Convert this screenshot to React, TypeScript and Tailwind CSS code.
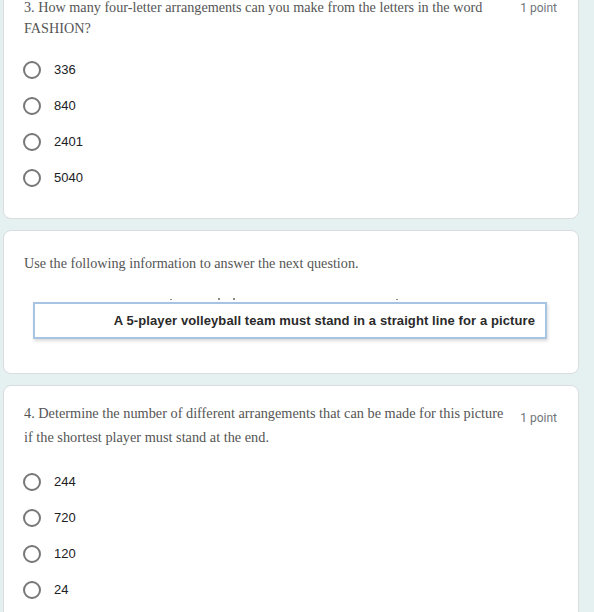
import React, { FC } from 'react';

const serif = "font-['Liberation_Serif','Times_New_Roman',serif]";

const Radio: FC<{ label: string }> = ({ label }) => (
  <div className="flex items-center h-[36px]">
    <span className="w-[18px] h-[18px] rounded-full border-2 border-[#777] -ml-[1px] shrink-0" />
    <span className="ml-[13px] text-[13px] text-[#202124] font-['Liberation_Sans','Arial',sans-serif]">{label}</span>
  </div>
);

const Points: FC = () => (
  <span className="text-[12px] text-[#70757a] font-['Roboto','Liberation_Sans',sans-serif] whitespace-nowrap">1 point</span>
);

const Card: FC<{ className?: string; children: React.ReactNode }> = ({ className = '', children }) => (
  <div className={`bg-white rounded-lg border border-[#dadce0] px-[20px] ${className}`}>{children}</div>
);

const App: FC = () => {
  return (
    <div className="min-h-screen bg-[#e5f1f1] pl-[3px] pr-[15px] overflow-hidden">
      <div className="flex flex-col gap-[11px] -mt-[28px]">
        <Card className="pt-[24px] pb-[22px]">
          <div className="flex items-start justify-between">
            <div className={`${serif} text-[14.2px] leading-[21px] text-[#555] whitespace-nowrap`}>
              3. How many four-letter arrangements can you make from the letters in the word
              <br />
              FASHION?
            </div>
            <div className="-mt-[3px] pr-[1px]"><Points /></div>
          </div>
          <div className="mt-[13px]">
            <Radio label="336" />
            <Radio label="840" />
            <Radio label="2401" />
            <Radio label="5040" />
          </div>
        </Card>

        <Card className="pt-[21px] pb-[34px]">
          <div className={`${serif} text-[14.2px] leading-[22px] text-[#555]`}>
            Use the following information to answer the next question.
          </div>
          <div className="mt-[23px] ml-[9px] w-[514px]">
            <svg width="514" height="5" className="block">
              <rect x="137" y="2" width="2" height="1" fill="#8a8a8a" />
              <rect x="185" y="1" width="2" height="2" fill="#8a8a8a" />
              <rect x="200" y="1" width="2" height="2" fill="#8a8a8a" />
              <rect x="363" y="2" width="2" height="1" fill="#8a8a8a" />
            </svg>
            <div className="h-[37px] border-2 border-[#a8c4e4] shadow-[1px_2px_3px_rgba(0,0,0,0.15)] flex items-center justify-end pr-[10px]">
              <span className="font-['Liberation_Sans','Arial',sans-serif] font-bold text-[13px] tracking-[0.1px] text-[#2a2a2a]">
                A 5-player volleyball team must stand in a straight line for a picture
              </span>
            </div>
          </div>
        </Card>

        <Card className="pt-[15px] pb-[24px]">
          <div className="flex items-start justify-between">
            <div className={`${serif} text-[14.3px] leading-[24px] text-[#555] whitespace-nowrap`}>
              4. Determine the number of different arrangements that can be made for this picture
              <br />
              if the shortest player must stand at the end.
            </div>
            <div className="pt-[3px] pr-[1px]"><Points /></div>
          </div>
          <div className="mt-[15px]">
            <Radio label="244" />
            <Radio label="720" />
            <Radio label="120" />
            <Radio label="24" />
          </div>
        </Card>
      </div>
    </div>
  );
};

export default App;
